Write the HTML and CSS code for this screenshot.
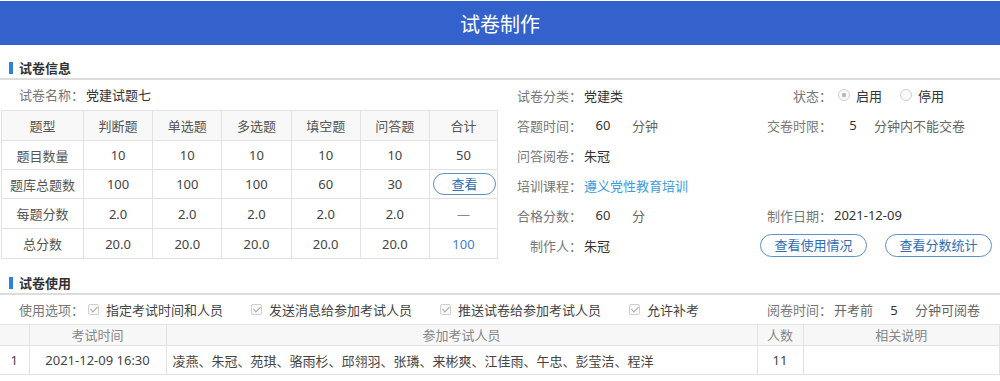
FILE: index.html
```html
<!DOCTYPE html>
<html lang="zh-CN">
<head>
    <meta charset="UTF-8">
    <meta name="viewport" content="width=device-width, initial-scale=1.0">
    <title>试卷制作</title>
    <link rel="stylesheet" href="styles.css">
</head>
<body>
    <div class="top-bar">试卷制作</div>

    <div class="sec-title"><span class="mark"></span>试卷信息</div>
    <div class="info">
        <div class="info-left">
            <div class="name-row"><span class="name-lbl">试卷名称：</span><span class="val">党建试题七</span></div>
            <table class="count-table">
                <tr class="head">
                    <th>题型</th><th>判断题</th><th>单选题</th><th>多选题</th><th>填空题</th><th>问答题</th><th>合计</th>
                </tr>
                <tr class="r29">
                    <td class="first">题目数量</td><td>10</td><td>10</td><td>10</td><td>10</td><td>10</td><td>50</td>
                </tr>
                <tr class="r29">
                    <td class="first">题库总题数</td><td>100</td><td>100</td><td>100</td><td>60</td><td>30</td>
                    <td><button class="pill small">查看</button></td>
                </tr>
                <tr>
                    <td class="first">每题分数</td><td>2.0</td><td>2.0</td><td>2.0</td><td>2.0</td><td>2.0</td><td class="dash">—</td>
                </tr>
                <tr>
                    <td class="first">总分数</td><td>20.0</td><td>20.0</td><td>20.0</td><td>20.0</td><td>20.0</td><td class="blue">100</td>
                </tr>
            </table>
        </div>

        <div class="info-right">
            <div><span class="lbl">试卷分类：</span><span class="val">党建类</span></div>
            <div>
                <span class="lbl">状态：</span>
                <span class="radio on"></span><span class="opt">启用</span>
                <span class="radio"></span><span class="opt">停用</span>
            </div>

            <div><span class="lbl">答题时间：</span><span class="num wide">60</span><span class="unit">分钟</span></div>
            <div><span class="lbl">交卷时限：</span><span class="num">5</span><span class="unit">分钟内不能交卷</span></div>

            <div><span class="lbl">问答阅卷：</span><span class="val">朱冠</span></div>
            <div></div>

            <div><span class="lbl">培训课程：</span><a class="link" href="#">遵义党性教育培训</a></div>
            <div></div>

            <div><span class="lbl">合格分数：</span><span class="num wide">60</span><span class="unit">分</span></div>
            <div><span class="lbl">制作日期：</span><span class="val">2021-12-09</span></div>

            <div><span class="lbl">制作人：</span><span class="val">朱冠</span></div>
            <div class="btns">
                <button class="pill">查看使用情况</button>
                <button class="pill">查看分数统计</button>
            </div>
        </div>
    </div>

    <div class="sec-title"><span class="mark"></span>试卷使用</div>
    <div class="options">
        <div class="opt-left">
            <span class="opt-lbl">使用选项：</span>
            <span class="chk"></span><span class="chk-text">指定考试时间和人员</span>
            <span class="chk"></span><span class="chk-text">发送消息给参加考试人员</span>
            <span class="chk"></span><span class="chk-text">推送试卷给参加考试人员</span>
            <span class="chk"></span><span class="chk-text">允许补考</span>
        </div>
        <div>
            <span class="lbl">阅卷时间：</span><span class="unit pre">开考前</span><span class="num">5</span><span class="unit">分钟可阅卷</span>
        </div>
    </div>

    <table class="use-table">
        <tr class="head">
            <th class="c-idx"></th>
            <th class="c-time">考试时间</th>
            <th class="c-names">参加考试人员</th>
            <th class="c-count">人数</th>
            <th class="c-note">相关说明</th>
        </tr>
        <tr class="row">
            <td>1</td>
            <td>2021-12-09 16:30</td>
            <td class="names">凌燕、朱冠、苑琪、骆雨杉、邱翎羽、张璘、来彬爽、江佳雨、午忠、彭莹洁、程洋</td>
            <td>11</td>
            <td></td>
        </tr>
    </table>
</body>
</html>
```

FILE: styles.css
```css
* {
    margin: 0;
    padding: 0;
    box-sizing: border-box;
}

body {
    font-family: "Noto Sans", "Noto Sans CJK SC", sans-serif;
    font-size: 13px;
    color: #333;
    background-color: #fff;
}

.top-bar {
    margin-top: 1px;
    height: 44px;
    line-height: 47px;
    text-align: center;
    font-size: 20px;
    color: #fff;
    background-color: #3462cc;
}

.sec-title {
    display: flex;
    align-items: center;
    height: 35px;
    padding: 15px 0 2px 9px;
    line-height: 16px;
    font-weight: bold;
    color: #333;
    border-bottom: 2px solid #dcdcdc;
}

.mark {
    width: 4px;
    height: 12px;
    margin-right: 6px;
    background-color: #2f80e0;
}

.info {
    display: flex;
}

.info-left {
    width: 497px;
    margin-left: 1px;
}

.name-row {
    height: 30px;
    line-height: 30px;
    padding-left: 18px;
}

.name-lbl {
    color: #777;
}

.val {
    margin-left: 2px;
    color: #333;
}

.count-table {
    width: 100%;
    border-collapse: collapse;
    table-layout: fixed;
    text-align: center;
}

.count-table th,
.count-table td {
    border: 1px solid #e2e2e2;
    font-weight: normal;
    color: #444;
}

.count-table th:first-child {
    width: 82px;
}

.count-table th:last-child {
    width: 68px;
}

.count-table tr {
    height: 30px;
}

.count-table tr.r29 {
    height: 29px;
}

.count-table .head th {
    background-color: #f8f8f8;
    color: #555;
}

.count-table .first {
    color: #555;
}

.count-table .dash {
    color: #888;
}

.count-table .blue {
    color: #3d7fd1;
}

.info-right {
    flex: 1;
    margin-left: 12px;
    display: grid;
    grid-template-columns: 250px 1fr;
    grid-auto-rows: 30px;
    align-items: center;
}

.info-right > div,
.options > div {
    display: flex;
    align-items: center;
}

.lbl {
    display: inline-block;
    width: 72px;
    text-align: right;
    color: #777;
}

.num {
    display: inline-block;
    width: 42px;
    text-align: center;
    color: #333;
}

.num.wide {
    margin-right: 8px;
}

.unit {
    color: #666;
}

.unit.pre {
    margin-left: 2px;
}

.link {
    margin-left: 2px;
    color: #3c9be0;
    text-decoration: none;
}

.radio {
    display: inline-block;
    width: 12px;
    height: 12px;
    margin: 0 6px;
    border: 1px solid #cfcfcf;
    border-radius: 50%;
    background-color: #fafafa;
}

.radio.on {
    background: radial-gradient(circle, #b8b8b8 0 2px, #fafafa 2.5px);
}

.opt {
    margin-right: 12px;
    color: #333;
}

.btns {
    gap: 18px;
}

button {
    font-family: inherit;
    cursor: pointer;
}

.pill {
    width: 107px;
    height: 23px;
    border: 1px solid #5d8fc9;
    border-radius: 12px;
    background-color: #fff;
    color: #2f6db5;
    font-size: 13px;
    line-height: 20px;
}

.pill.small {
    width: 63px;
    height: 22px;
    margin-left: 2px;
}

.options {
    display: flex;
    height: 29px;
}

.opt-left {
    width: 760px;
    padding-left: 19px;
}

.opt-lbl {
    color: #777;
    margin-right: 4px;
}

.chk {
    position: relative;
    display: inline-block;
    width: 11px;
    height: 11px;
    margin-right: 7px;
    border: 1px solid #d0d0d0;
    border-radius: 2px;
    background-color: #fafafa;
}

.chk::after {
    content: "";
    position: absolute;
    left: 3px;
    top: 0;
    width: 3px;
    height: 6px;
    border: solid #a8a8a8;
    border-width: 0 1px 1px 0;
    transform: rotate(45deg);
}

.chk-text {
    margin-right: 28px;
    color: #444;
}

.use-table {
    width: 1000px;
    border-collapse: collapse;
    table-layout: fixed;
    text-align: center;
}

.use-table th,
.use-table td {
    border: 1px solid #e2e2e2;
    font-weight: normal;
}

.use-table tr > :first-child {
    border-left: none;
}

.use-table .head {
    height: 21px;
}

.use-table .head th {
    background-color: #f7f7f7;
    color: #888;
    line-height: 19px;
}

.use-table .row {
    height: 29px;
}

.use-table td {
    color: #444;
}

.use-table .names {
    text-align: left;
    padding-left: 6px;
}

.c-idx { width: 29px; }
.c-time { width: 137px; }
.c-names { width: 591px; }
.c-count { width: 46px; }
```
